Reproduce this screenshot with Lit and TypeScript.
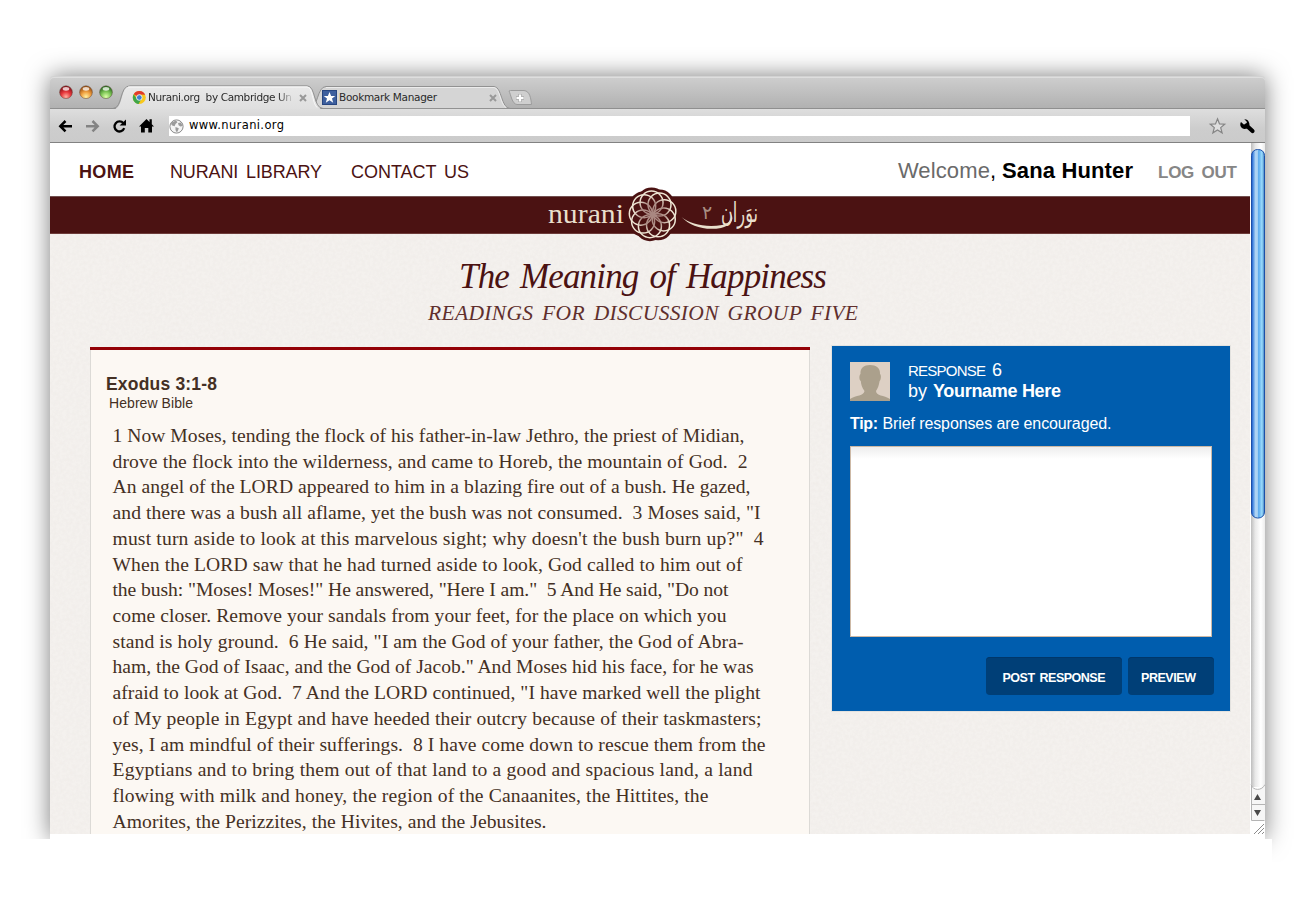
import { LitElement, html, svg, css } from "lit";
import { customElement, property } from "lit/decorators.js";

/** One run of text whose tracking is computed so that it fills a given width. */
@customElement("fit-text")
class FitText extends LitElement {
  @property({ type: Number }) w = 0;
  static styles = css`
    :host { display: inline-block; white-space: pre; text-align: left; }
    .run { display: inline-block; white-space: pre; }
  `;
  render() {
    return html`<span class="run"><slot></slot></span>`;
  }
  firstUpdated() {
    const run = this.renderRoot.querySelector(".run") as HTMLElement;
    const n = (this.textContent || "").length;
    const natural = run.getBoundingClientRect().width;
    this.style.width = `${this.w}px`;
    if (n > 1) run.style.letterSpacing = `${(this.w - natural) / (n - 1)}px`;
  }
}

const LINES: [string, number][] = [
  ["1 Now Moses, tending the flock of his father-in-law Jethro, the priest of Midian,", 632],
  ["drove the flock into the wilderness, and came to Horeb, the mountain of God.  2", 635],
  ["An angel of the LORD appeared to him in a blazing fire out of a bush. He gazed,", 638],
  ["and there was a bush all aflame, yet the bush was not consumed.  3 Moses said, \"I", 648],
  ["must turn aside to look at this marvelous sight; why doesn't the bush burn up?\"  4", 651],
  ["When the LORD saw that he had turned aside to look, God called to him out of", 630],
  ["the bush: \"Moses! Moses!\" He answered, \"Here I am.\"  5 And He said, \"Do not", 616],
  ["come closer. Remove your sandals from your feet, for the place on which you", 614],
  ["stand is holy ground.  6 He said, \"I am the God of your father, the God of Abra-", 631],
  ["ham, the God of Isaac, and the God of Jacob.\" And Moses hid his face, for he was", 641],
  ["afraid to look at God.  7 And the LORD continued, \"I have marked well the plight", 648],
  ["of My people in Egypt and have heeded their outcry because of their taskmasters;", 649],
  ["yes, I am mindful of their sufferings.  8 I have come down to rescue them from the", 653],
  ["Egyptians and to bring them out of that land to a good and spacious land, a land", 640],
  ["flowing with milk and honey, the region of the Canaanites, the Hittites, the", 596],
  ["Amorites, the Perizzites, the Hivites, and the Jebusites.", 434],
];

const PETALS = Array.from({ length: 9 }, (_, i) => {
  const a = ((i * 40 - 96) * Math.PI) / 180;
  return { x: 652.8 + Math.cos(a) * 12, y: 214.5 + Math.sin(a) * 12 };
});

@customElement("browser-chrome")
class BrowserChrome extends LitElement {
  static styles = css`
    :host { display: block; font-family: "DejaVu Sans", sans-serif; color: #2a2a2a; }
    .strip { display: grid; height: 33px; background: linear-gradient(#cfcfcf, #b0b0b0); box-shadow: inset 0 1px #d2d2d2, inset 0 2px #dedede; border-radius: 4px 4px 0 0; }
    .strip > * { grid-area: 1 / 1; }
    svg { display: block; }
    .labels { display: flex; align-items: flex-start; padding: 14px 0 0 98px; font-size: 10.5px; line-height: 14px; }
    .first { width: 191px; -webkit-mask-image: linear-gradient(90deg, #000 130px, rgba(0,0,0,.12) 144px); }
    .bar { display: flex; align-items: flex-start; height: 33px; border-bottom: 1px solid #828282; background: linear-gradient(#dedede, #cdcdcd 60%, #cbcbcb); box-sizing: content-box; }
    .nav { width: 119px; height: 33px; }
    .url { display: flex; width: 1021px; height: 20px; margin-top: 7px; background: #fff; font-size: 11.5px; line-height: 18px; color: #000; }
    .globe { margin: 3px 5px 0 0; }
    .tools { width: 75px; height: 33px; }
  `;
  render() {
    return html`
      <div class="strip">
        <svg width="1215" height="33" viewBox="50 76 1215 33">
          <defs>
            <linearGradient id="tab" x1="0" y1="0" x2="0" y2="1"><stop offset="0" stop-color="#e9e9e9"/><stop offset="1" stop-color="#dfdfdf"/></linearGradient>
            <radialGradient id="r" cx=".5" cy=".85" r=".75"><stop offset="0" stop-color="#ffb0a0"/><stop offset=".5" stop-color="#e8383c"/><stop offset="1" stop-color="#8c1018"/></radialGradient>
            <radialGradient id="o" cx=".5" cy=".85" r=".75"><stop offset="0" stop-color="#fff0a0"/><stop offset=".5" stop-color="#f0a040"/><stop offset="1" stop-color="#9c5010"/></radialGradient>
            <radialGradient id="g" cx=".5" cy=".85" r=".75"><stop offset="0" stop-color="#dcffa8"/><stop offset=".5" stop-color="#80c858"/><stop offset="1" stop-color="#2c7020"/></radialGradient>
          </defs>
          <path d="M50 108.5H1265" stroke="#8f8f8f"/>
          <path d="M310 108.5C318 108 317 86.500 326 86.500H494C502 86.500 501 108.500 510 108.500Z" fill="#d5d5d5" stroke="#929292"/>
          <path d="M326 87.500H494C500 88 500 104 506 107.500" fill="none" stroke="#ececec"/>
          <path d="M113 109.500C124 109 120 85.800 130 85.800H307C316 85.800 313 109 323 109.500Z" fill="url(#tab)"/>
          <path d="M113 108.500C123 108 119 85.800 130 85.800H307C316 85.800 313 108 323 108.500" fill="none" stroke="#929292"/>
          <path d="M128 87H307C313 87 312 103 317 107.500" fill="none" stroke="#f8f8f8"/>
          <path d="M510.500 90.500H524C530 91 531 99 531.500 104.500H517C512 104 511 95 509 91Z" fill="#cfcfcf" stroke="#9c9c9c"/>
          <path d="M520 94V102M516 98H524" stroke="#aaa" stroke-width="3.600"/>
          <path d="M520 94.500V101.500M516.500 98H523.500" stroke="#fff" stroke-width="2.200"/>
          ${[["r", 66], ["o", 86], ["g", 106]].map(([id, x]) => svg`
            <circle cx=${x} cy="92.200" r="6.400" fill="url(#${id})" stroke="#5c4a40" stroke-opacity=".6" stroke-width=".8"/>
            <ellipse cx=${x} cy="88.800" rx="3.300" ry="1.900" fill="#fff" opacity=".75"/>`)}
          <circle cx="139.300" cy="97.500" r="6.500" fill="#f8c81c"/>
          <path d="M139.300 97.500L133.700 94.200A6.500 6.500 0 0 1 145.200 94.800L139.300 94.500Z" fill="#e03a2c"/>
          <path d="M133.700 94.200A6.500 6.500 0 0 0 138.600 104L141.500 98.800L137 99Z" fill="#3fa648"/>
          <circle cx="139.300" cy="97.500" r="2.800" fill="#3f7fd0" stroke="#eef2f8" stroke-width=".9"/>
          <path d="M300 95L306 101M306 95L300 101" stroke="#999" stroke-width="2"/>
          <path d="M490 95L496 101M496 95L490 101" stroke="#999" stroke-width="2"/>
          <rect x="322.500" y="90.500" width="14" height="14" fill="#3d5f9e" stroke="#274580"/>
          <path d="M329.500 92L331.100 96H335.300L332 98.600L333.200 102.800L329.500 100.300L325.800 102.800L327 98.600L323.700 96H327.900Z" fill="#fff"/>
        </svg>
        <div class="labels">
          <div class="first"><fit-text w="144">Nurani.org  by Cambridge Un</fit-text></div>
          <fit-text w="98">Bookmark Manager</fit-text>
        </div>
      </div>
      <div class="bar">
        <svg class="nav" viewBox="50 109 119 33" fill="none">
          <path d="M60 126.200H72M65.500 121L60.300 126.200L65.500 131.400" stroke="#000" stroke-width="2.500"/>
          <path d="M86 126.200H98M92.500 121L97.700 126.200L92.500 131.400" stroke="#838383" stroke-width="2.500"/>
          <path d="M123.400 123.300A5 5 0 1 0 124.200 128.200" stroke="#000" stroke-width="2.300"/>
          <path d="M126 119.600V125.600H119.600Z" fill="#000"/>
          <path d="M139 126.500L146.500 119L149.500 122V119.200H151.800V124.300L154 126.500H152V132.500H148.300V128H144.800V132.500H141V126.500Z" fill="#000"/>
        </svg>
        <div class="url">
          <svg class="globe" width="15" height="15" viewBox="0 0 15 15"><circle cx="7.500" cy="7.500" r="6.600" fill="#f4f4f4" stroke="#8a8a8a"/><path d="M2.500 3.500L7 1.600L8.500 3.200L6.500 5L5.600 7.200L3.200 6.500L2 5ZM9 4L12 3.500L13.600 7L11.500 7.500L9.600 6.200ZM6.500 8L9.800 9.200L9 11.500L7.800 13.400L6.500 11Z" fill="#9a9a9a"/></svg>
          <fit-text w="95">www.nurani.org</fit-text>
        </div>
        <svg class="tools" viewBox="1190 109 75 33">
          <path d="M1217.500 118.800L1219.500 123.900L1224.700 124.200L1220.700 127.600L1222.100 132.800L1217.500 129.900L1212.900 132.800L1214.300 127.600L1210.300 124.200L1215.500 123.900Z" fill="#dedede" stroke="#858585" stroke-width="1.200"/>
          <path d="M1246.500 125.500L1252.500 131" stroke="#000" stroke-width="4.200" stroke-linecap="round"/>
          <path d="M1244.300 119.200L1247 122L1246 124.300L1243.800 124.600L1241 121.900A4.600 4.600 0 1 0 1249 122.400A4.800 4.800 0 0 0 1244.300 119.200Z" fill="#000"/>
        </svg>
      </div>`;
  }
}

@customElement("app-root")
class AppRoot extends LitElement {
  static styles = css`
    :host { display: block; width: 1300px; height: 904px; background: #fff; overflow: hidden; }
    .stage { padding: 76px 35px 65px 50px; height: 763px; clip-path: polygon(0 0, 1300px 0, 1300px 862px, 1272px 862px, 1272px 839px, 0 839px); }
    .window { width: 1215px; height: 763px; background: #fff; border-radius: 5px 5px 0 0; box-shadow: 0 0 24px rgba(0,0,0,.52); }
    .view { display: flex; height: 691px; overflow: hidden; }
    .page { width: 1200px; height: 691px; overflow: hidden; font-family: "Liberation Sans", sans-serif;
      background: #f4f1ee url("data:image/svg+xml,%3Csvg xmlns='http://www.w3.org/2000/svg' width='160' height='160'%3E%3Cfilter id='n'%3E%3CfeTurbulence type='fractalNoise' baseFrequency='.3' numOctaves='3' stitchTiles='stitch'/%3E%3CfeColorMatrix values='0 0 0 0 .5 0 0 0 0 .42 0 0 0 0 .36 .12 0 0 0 -.04'/%3E%3C/filter%3E%3Crect width='160' height='160' filter='url(%23n)'/%3E%3C/svg%3E"); }
    .menu { display: flex; align-items: flex-start; height: 53px; padding: 17px 13px 0 29px; box-sizing: border-box; background: #fff; font-size: 18px; line-height: 24px; color: #4b1212; word-spacing: 3px; }
    .lib { margin-left: 36px; }
    .contact { margin: 0 auto 0 29px; }
    .hi { display: flex; font-size: 22px; line-height: 22px; color: #6a6a6a; word-spacing: 0; }
    .comma { color: #000; }
    .who { margin-left: 6px; }
    .hi .who { color: #000; }
    .out { margin-left: 25px; font-size: 17px; line-height: 25px; color: #868686; }
    .ribbon { display: flex; align-items: center; height: 38px; padding-left: 495px; background: #4b1212; box-shadow: inset 0 1px #725050, inset 0 -1px #6d3c3a; box-sizing: border-box; }
    .ribbon svg { flex: none; overflow: visible; display: block; }
    .titles { display: flex; flex-direction: column; align-items: center; height: 112px; padding: 21px 14px 0 0; box-sizing: border-box; font-family: "Liberation Serif", serif; font-style: italic; color: #4b1212; }
    .t1 { font-size: 35px; line-height: 44px; word-spacing: 3px; }
    .t2 { font-size: 21.5px; line-height: 28px; color: #602f2d; word-spacing: 3px; }
    .cols { display: flex; align-items: flex-start; padding-left: 40px; }
    .card { width: 720px; height: 500px; box-sizing: border-box; margin: 1px 22px 0 0; border-top: 3px solid #930006; padding: 23px 0 0 16px; background: #fcf8f3; box-shadow: inset 1px 0 #dcdad6, inset -1px 0 #dcdad6; color: #443024; }
    .ref { font-size: 17.5px; line-height: 22px; height: 22px; }
    .src { font-size: 14px; line-height: 18px; height: 18px; padding-left: 3px; margin-bottom: 11px; margin-top: -1px; }
    .passage { padding-left: 6.5px; font-family: "Liberation Serif", serif; font-size: 19.6px; line-height: 25.720px; }
    .line { height: 25.720px; }
    .panel { width: 398px; height: 365px; box-sizing: border-box; padding: 16px 16px 16px 18px; background: #005dae; color: #fff; box-shadow: 0 0 0 1px #e3e2df; }
    .by { display: flex; height: 40px; }
    .avatar { display: block; margin-right: 18px; }
    .resp { display: flex; align-items: baseline; gap: 6px; font-size: 15px; line-height: 18px; height: 18px; margin-top: -1px; margin-bottom: 1px; }
    .num { font-size: 18px; }
    .name { font-size: 18px; line-height: 23px; }
    .tip { height: 44px; padding-top: 12px; box-sizing: border-box; line-height: 20px; font-size: 16px; }
    .field { display: block; width: 362px; height: 191px; box-sizing: border-box; border: 1px solid #cdb9a6; background: linear-gradient(#ededed, #fff 12px); resize: none; padding: 4px; outline: none; }
    .actions { display: flex; justify-content: flex-end; gap: 6px; padding-top: 20px; }
    .btn { display: flex; align-items: center; justify-content: center; height: 38px; padding: 3px 0 0; border: 0; border-radius: 4px; background: #003f77; box-shadow: inset 0 1px #00376a; color: #fff; font: bold 12.5px "Liberation Sans", sans-serif; word-spacing: 2px; }
    .post { width: 136px; }
    .prev { width: 86px; padding-right: 5px; }
    .scroll { display: block; }
    b { font-weight: 700; }
  `;
  render() {
    return html`
      <div class="stage"><div class="window">
        <browser-chrome></browser-chrome>
        <div class="view">
          <div class="page">
            <nav class="menu">
              <b><fit-text w="55">HOME</fit-text></b>
              <fit-text class="lib" w="152">NURANI LIBRARY</fit-text>
              <fit-text class="contact" w="118">CONTACT US</fit-text>
              <span class="hi"><fit-text w="92">Welcome</fit-text><span class="comma">,</span><b class="who"><fit-text w="131">Sana Hunter</fit-text></b></span>
              <b class="out"><fit-text w="79">LOG OUT</fit-text></b>
            </nav>
            <div class="ribbon">
              <svg width="220" height="58" viewBox="545 186 220 58">
                <defs><radialGradient id="petal" gradientUnits="userSpaceOnUse" cx="652.800" cy="214.500" r="24"><stop offset="0" stop-color="#a88680"/><stop offset=".5" stop-color="#b09088"/><stop offset=".8" stop-color="#efe6d4"/></radialGradient></defs>
                <g fill="#4b1212">${PETALS.map((p) => svg`<circle cx=${p.x} cy=${p.y} r="15"/>`)}</g>
                <text x="548" y="222.700" textLength="76" lengthAdjust="spacingAndGlyphs" font-family="Liberation Serif" font-size="28" fill="#e9dfcc">nurani</text>
                <g fill="none" stroke="url(#petal)" stroke-width="1.500">${PETALS.map((p) => svg`<circle cx=${p.x} cy=${p.y} r="11.500"/>`)}</g>
                <text x="758" y="222" text-anchor="start" direction="rtl" font-family="DejaVu Sans" font-size="27" textLength="37" lengthAdjust="spacingAndGlyphs" fill="#e9dfcc">نوَران</text>
                <path d="M681.500 217C690 224 706 228 722 225C728 224 732 220 731 214C735 220 730 226 721 228C705 231 690 226 681.500 217Z" fill="#e9dfcc"/>
                <text x="702" y="219" font-family="DejaVu Sans" font-size="19" fill="#a98e83">٢</text>
              </svg>
            </div>
            <header class="titles">
              <fit-text class="t1" w="368">The Meaning of Happiness</fit-text>
              <fit-text class="t2" w="430">READINGS FOR DISCUSSION GROUP FIVE</fit-text>
            </header>
            <div class="cols">
              <article class="card">
                <div class="ref"><b><fit-text w="111">Exodus 3:1-8</fit-text></b></div>
                <div class="src"><fit-text w="84">Hebrew Bible</fit-text></div>
                <div class="passage">${LINES.map(([t, w]) => html`<div class="line"><fit-text .w=${w}>${t}</fit-text></div>`)}</div>
              </article>
              <section class="panel">
                <div class="by">
                  <svg class="avatar" width="40" height="39" viewBox="0 0 40 39"><rect width="40" height="39" fill="#ddd0c4"/><path d="M0 39V37C6 33 14 34 14.500 29C12 26 11 22 10.800 19C9 18 9 13 10.500 12C10 6 14 3 20 3S30.500 6 30 12C31.500 13 31 18 29.600 19C29 23 28 26 26 29C26 34 34 33 40 37V39Z" fill="#aba08c"/></svg>
                  <div>
                    <div class="resp"><fit-text w="78">RESPONSE</fit-text><span class="num">6</span></div>
                    <div class="name"><fit-text w="19">by</fit-text><b class="who"><fit-text w="128">Yourname Here</fit-text></b></div>
                  </div>
                </div>
                <div class="tip"><b><fit-text w="28">Tip:</fit-text></b> <fit-text w="229">Brief responses are encouraged.</fit-text></div>
                <textarea class="field"></textarea>
                <div class="actions">
                  <button class="btn post"><fit-text w="103">POST RESPONSE</fit-text></button>
                  <button class="btn prev"><fit-text w="55">PREVIEW</fit-text></button>
                </div>
              </section>
            </div>
          </div>
          <svg class="scroll" width="15" height="691" viewBox="1250 143 15 691">
            <defs>
              <linearGradient id="track"><stop offset="0" stop-color="#bdbdbd"/><stop offset=".3" stop-color="#e8e8e8"/><stop offset=".7" stop-color="#fff"/><stop offset="1" stop-color="#ececec"/></linearGradient>
              <linearGradient id="thumb"><stop offset="0" stop-color="#1450c8"/><stop offset=".16" stop-color="#5d9be6"/><stop offset=".32" stop-color="#b4d6f4"/><stop offset=".46" stop-color="#a4d0f4"/><stop offset=".55" stop-color="#58a8ec"/><stop offset=".8" stop-color="#9cdcfc"/><stop offset="1" stop-color="#3a7cc0"/></linearGradient>
            </defs>
            <rect x="1250" y="143" width="15" height="691" fill="#fff"/>
            <rect x="1251" y="143" width="14" height="644" fill="url(#track)"/>
            <rect x="1251.500" y="149.500" width="13" height="368.500" rx="6" fill="url(#thumb)" stroke="#1c50a8"/>
            <path d="M1251 784C1253 791 1262 791 1265 784V820H1251Z" fill="#f6f6f6"/>
            <path d="M1251 784.500C1253 791 1262 791 1265 784.500M1251.500 786V820.500H1264.500M1251 804.500H1265" fill="none" stroke="#b4b4b4"/>
            <path d="M1254 800L1257.500 794L1261 800ZM1254 810L1257.500 816L1261 810Z" fill="#4a4a4a"/>
            <path d="M1254 834L1264 824M1258 834L1264 828M1262 834L1264 832" stroke="#8c8c8c"/>
          </svg>
        </div>
      </div></div>`;
  }
}
